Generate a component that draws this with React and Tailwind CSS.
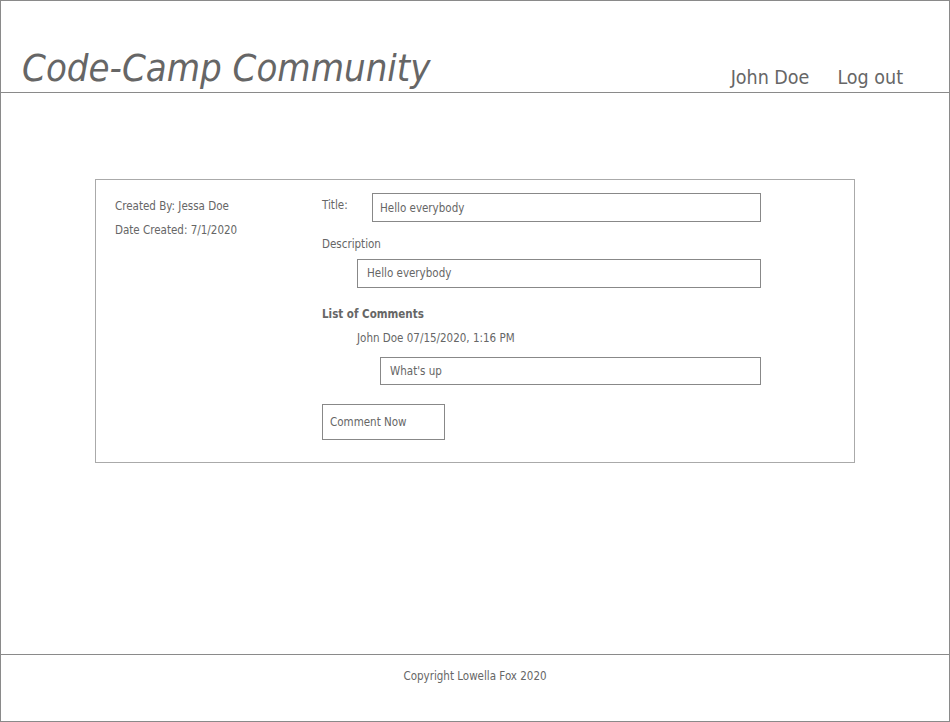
export default function App() {
  return (
    <div
      className="w-[950px] h-[722px] border border-[#8a8a8a] flex flex-col bg-white text-[#666]"
      style={{ fontFamily: '"DejaVu Sans Condensed", "DejaVu Sans", Tahoma, sans-serif' }}
    >
      {/* Header */}
      <header className="h-[92px] shrink-0 border-b border-[#8a8a8a] flex items-end justify-between pl-[21px] pr-[46px] pb-[3px]">
        <h1 className="text-[38px] italic leading-none pb-[2px] text-[#666]">Code-Camp Community</h1>
        <nav className="flex gap-[28px] text-[19.5px] leading-none pb-[2px]">
          <span>John Doe</span>
          <span>Log out</span>
        </nav>
      </header>

      {/* Main */}
      <main className="flex-1 pt-[86px]">
        <div className="mx-auto w-[760px] border border-[#aaa] flex pt-[13px] pb-[22px] pl-[19px] text-[11.5px] leading-[13px]">
          <div className="w-[207px] shrink-0 pt-[7px] flex flex-col gap-[11px]">
            <p>Created By: Jessa Doe</p>
            <p>Date Created: 7/1/2020</p>
          </div>
          <div className="flex flex-col">
            <div className="flex items-start">
              <span className="w-[50px] pt-[6px]">Title:</span>
              <div className="w-[389px] h-[29px] border border-[#888] pl-[7px] pt-[2px] flex items-center">Hello everybody</div>
            </div>
            <p className="mt-[16px]">Description</p>
            <div className="ml-[35px] mt-[8px] w-[404px] h-[29px] border border-[#888] pl-[9px] flex items-center">Hello everybody</div>
            <p className="mt-[20px] font-bold">List of Comments</p>
            <p className="ml-[35px] mt-[11px]">John Doe 07/15/2020, 1:16 PM</p>
            <div className="ml-[58px] mt-[12px] w-[381px] h-[28px] border border-[#888] pl-[9px] flex items-center">What's up</div>
            <div className="mt-[19px] w-[123px] h-[36px] border border-[#888] pl-[7px] flex items-center">Comment Now</div>
          </div>
        </div>
      </main>

      {/* Footer */}
      <footer className="h-[67px] shrink-0 border-t border-[#8a8a8a] pt-[15px] text-center text-[11.5px] leading-[13px]">
        Copyright Lowella Fox 2020
      </footer>
    </div>
  );
}
